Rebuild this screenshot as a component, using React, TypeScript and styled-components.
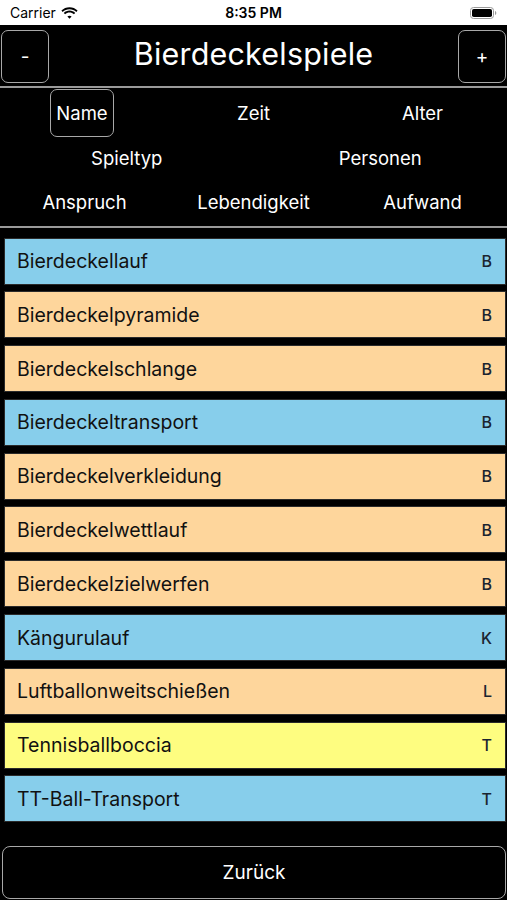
import React from "react";
import styled, { createGlobalStyle } from "styled-components";

const GlobalStyle = createGlobalStyle`
  html, body {
    margin: 0;
    padding: 0;
    background: #000;
  }
  body {
    font-family: Inter, "Liberation Sans", Arial, sans-serif;
  }
  * { box-sizing: border-box; }
`;

const Page = styled.div`
  width: 507px;
  height: 900px;
  display: flex;
  flex-direction: column;
  background: #000;
  overflow: hidden;
`;

const StatusBar = styled.div`
  height: 25px;
  background: #fff;
  color: #000;
  display: grid;
  grid-template-columns: 1fr auto 1fr;
  align-items: center;
  padding: 0 10px 0 10px;
  font-size: 14px;
`;

const Carrier = styled.div`
  display: flex;
  align-items: center;
  gap: 5px;
`;

const Clock = styled.div`
  font-weight: 600;
`;

const BatteryWrap = styled.div`
  display: flex;
  justify-content: flex-end;
`;

const Header = styled.div`
  height: 61px;
  display: flex;
  align-items: center;
  justify-content: space-between;
  padding: 0 1px 0 1px;
`;

const StepButton = styled.button`
  width: 48px;
  height: 53px;
  margin-top: 1px;
  border: 1.5px solid #a8a8a8;
  border-radius: 7px;
  background: #000;
  color: #fff;
  font-family: inherit;
  font-size: 19px;
  padding: 0;
`;

const Title = styled.h1`
  margin: 0 0 5px;
  color: #fff;
  font-size: 30.5px;
  font-weight: 400;
  letter-spacing: 0.2px;
`;

const Divider = styled.div<{ $h: number }>`
  height: ${(p) => p.$h}px;
  background: #9a9a9a;
`;

const SortPanel = styled.div`
  height: 138px;
  padding-top: 1px;
  display: flex;
  flex-direction: column;
`;

const SortRow = styled.div<{ $cols: number }>`
  height: 44.5px;
  display: grid;
  grid-template-columns: repeat(${(p) => p.$cols}, 1fr);
  align-items: center;
  justify-items: center;
`;

const SortButton = styled.button<{ $active?: boolean }>`
  height: 48px;
  padding: 0 5px;
  border: 1.5px solid ${(p) => (p.$active ? "#a8a8a8" : "transparent")};
  border-radius: 7px;
  background: transparent;
  color: #fff;
  font-family: inherit;
  font-size: 18.5px;
  margin-right: ${(p) => (p.$active ? "5px" : "0")};
`;

const List = styled.div`
  flex: 1;
  display: flex;
  flex-direction: column;
  gap: 6.8px;
  padding: 10px 1px 0 4px;
`;

const GameRow = styled.div<{ $bg: string }>`
  height: 47px;
  display: flex;
  align-items: center;
  justify-content: space-between;
  padding: 0 13px 0 12px;
  background: ${(p) => p.$bg};
  border: 1px solid #2a2a2a;
  color: #111;
`;

const GameName = styled.span`
  font-size: 19.5px;
`;

const GameLetter = styled.span`
  font-size: 16px;
  font-weight: 500;
  color: #1b2430;
`;

const Footer = styled.div`
  padding: 0 1px 1px 2px;
`;

const BackButton = styled.button`
  width: 100%;
  height: 53px;
  border: 1.5px solid #a8a8a8;
  border-radius: 8px;
  background: #000;
  color: #fff;
  font-family: inherit;
  font-size: 19px;
`;

const BLUE = "#87ceeb";
const PEACH = "#fed69c";
const YELLOW = "#fefd80";

const games = [
  { name: "Bierdeckellauf", letter: "B", color: BLUE },
  { name: "Bierdeckelpyramide", letter: "B", color: PEACH },
  { name: "Bierdeckelschlange", letter: "B", color: PEACH },
  { name: "Bierdeckeltransport", letter: "B", color: BLUE },
  { name: "Bierdeckelverkleidung", letter: "B", color: PEACH },
  { name: "Bierdeckelwettlauf", letter: "B", color: PEACH },
  { name: "Bierdeckelzielwerfen", letter: "B", color: PEACH },
  { name: "Kängurulauf", letter: "K", color: BLUE },
  { name: "Luftballonweitschießen", letter: "L", color: PEACH },
  { name: "Tennisballboccia", letter: "T", color: YELLOW },
  { name: "TT-Ball-Transport", letter: "T", color: BLUE },
];

const Wifi = () => (
  <svg width="17" height="12" viewBox="0 0 17 12">
    <path d="M8.5 2.2c2.6 0 5 1 6.8 2.7l1.3-1.3C14.4 1.5 11.6.3 8.5.3S2.6 1.5.4 3.6l1.3 1.3C3.5 3.2 5.9 2.2 8.5 2.2z" fill="#000" />
    <path d="M8.5 5.5c1.7 0 3.2.6 4.4 1.7l1.3-1.3C12.7 4.5 10.7 3.6 8.5 3.6s-4.2.9-5.7 2.3l1.3 1.3C5.3 6.1 6.8 5.5 8.5 5.5z" fill="#000" />
    <path d="M8.5 8.7c.8 0 1.5.3 2.1.8L8.5 11.7 6.4 9.5c.6-.5 1.3-.8 2.1-.8z" fill="#000" />
  </svg>
);

const Battery = () => (
  <svg width="27" height="12" viewBox="0 0 27 12">
    <rect x="0.5" y="0.5" width="23" height="11" rx="3" fill="none" stroke="#9a9a9a" />
    <rect x="2" y="2" width="20" height="8" rx="1.8" fill="#000" />
    <path d="M25 4v4c.8-.3 1.3-1.1 1.3-2S25.8 4.3 25 4z" fill="#9a9a9a" />
  </svg>
);

export default function App() {
  return (
    <>
      <GlobalStyle />
      <Page>
        <StatusBar>
          <Carrier>
            Carrier <Wifi />
          </Carrier>
          <Clock>8:35 PM</Clock>
          <BatteryWrap>
            <Battery />
          </BatteryWrap>
        </StatusBar>
        <Header>
          <StepButton>-</StepButton>
          <Title>Bierdeckelspiele</Title>
          <StepButton>+</StepButton>
        </Header>
        <Divider $h={2} />
        <SortPanel>
          <SortRow $cols={3}>
            <SortButton $active>Name</SortButton>
            <SortButton>Zeit</SortButton>
            <SortButton>Alter</SortButton>
          </SortRow>
          <SortRow $cols={2}>
            <SortButton>Spieltyp</SortButton>
            <SortButton>Personen</SortButton>
          </SortRow>
          <SortRow $cols={3}>
            <SortButton>Anspruch</SortButton>
            <SortButton>Lebendigkeit</SortButton>
            <SortButton>Aufwand</SortButton>
          </SortRow>
        </SortPanel>
        <Divider $h={1.5} />
        <List>
          {games.map((g) => (
            <GameRow key={g.name} $bg={g.color}>
              <GameName>{g.name}</GameName>
              <GameLetter>{g.letter}</GameLetter>
            </GameRow>
          ))}
        </List>
        <Footer>
          <BackButton>Zurück</BackButton>
        </Footer>
      </Page>
    </>
  );
}
